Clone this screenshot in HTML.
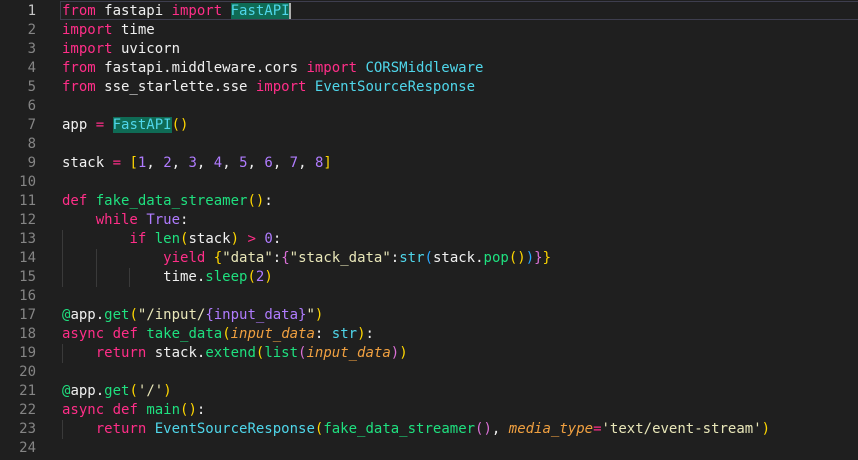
<html><head><style>
body{margin:0;background:#1f1f1f;width:858px;height:460px;overflow:hidden;font-family:"DejaVu Sans Mono","Liberation Mono",monospace;font-size:14px;}
.g{position:absolute;left:0;top:2px;width:36px;text-align:right;color:#858585;line-height:19px}
.g div:first-child{color:#c6c6c6}
.c{position:absolute;left:62px;top:2px;line-height:19px;color:#f0f0f0;white-space:pre}
.cur{position:absolute;left:60px;top:1px;width:800px;height:19px;border:1px solid #3e3e4e;box-sizing:border-box}
.k{color:#ff2e88}.f{color:#1fe07f}.t{color:#4fd6ea}.n{color:#b07cff}.s{color:#e8e6b8}
.y{color:#ffd700}.p{color:#da70d6}.b{color:#2aa8ff}.i{color:#f0a040;font-style:italic}
.h{background:#0f6b55}
.ig{position:absolute;width:1px;background:#3a3a3a}
.caret{position:absolute;left:289px;top:3px;width:2px;height:16px;background:#aeafad}
</style></head><body>
<div class="cur"></div>
<div class="ig" style="left:62px;top:230px;height:57px"></div>
<div class="ig" style="left:96px;top:249px;height:38px"></div>
<div class="ig" style="left:129px;top:268px;height:19px"></div>
<div class="ig" style="left:62px;top:344px;height:19px"></div>
<div class="ig" style="left:62px;top:420px;height:19px"></div>
<div class="g"><div>1</div><div>2</div><div>3</div><div>4</div><div>5</div><div>6</div><div>7</div><div>8</div><div>9</div><div>10</div><div>11</div><div>12</div><div>13</div><div>14</div><div>15</div><div>16</div><div>17</div><div>18</div><div>19</div><div>20</div><div>21</div><div>22</div><div>23</div><div>24</div></div>
<div class="c"><span class="k">from</span> fastapi <span class="k">import</span> <span class="t h">FastAPI</span>
<span class="k">import</span> time
<span class="k">import</span> uvicorn
<span class="k">from</span> fastapi.middleware.cors <span class="k">import</span> <span class="t">CORSMiddleware</span>
<span class="k">from</span> sse_starlette.sse <span class="k">import</span> <span class="t">EventSourceResponse</span>

app <span class="k">=</span> <span class="t h">FastAPI</span><span class="y">()</span>

stack <span class="k">=</span> <span class="y">[</span><span class="n">1</span>, <span class="n">2</span>, <span class="n">3</span>, <span class="n">4</span>, <span class="n">5</span>, <span class="n">6</span>, <span class="n">7</span>, <span class="n">8</span><span class="y">]</span>

<span class="k">def</span> <span class="f">fake_data_streamer</span><span class="y">()</span>:
    <span class="k">while</span> <span class="n">True</span>:
        <span class="k">if</span> <span class="f">len</span><span class="y">(</span>stack<span class="y">)</span> <span class="k">&gt;</span> <span class="n">0</span>:
            <span class="k">yield</span> <span class="y">{</span><span class="s">"data"</span>:<span class="p">{</span><span class="s">"stack_data"</span>:<span class="t">str</span><span class="b">(</span>stack.<span class="f">pop</span><span class="y">()</span><span class="b">)</span><span class="p">}</span><span class="y">}</span>
            time.<span class="f">sleep</span><span class="y">(</span><span class="n">2</span><span class="y">)</span>

<span class="f">@</span>app.<span class="f">get</span><span class="y">(</span><span class="s">"/input/</span><span class="n">{input_data}</span><span class="s">"</span><span class="y">)</span>
<span class="k">async</span> <span class="k">def</span> <span class="f">take_data</span><span class="y">(</span><span class="i">input_data</span>: <span class="t">str</span><span class="y">)</span>:
    <span class="k">return</span> stack.<span class="f">extend</span><span class="y">(</span><span class="f">list</span><span class="p">(</span><span class="i">input_data</span><span class="p">)</span><span class="y">)</span>

<span class="f">@</span>app.<span class="f">get</span><span class="y">(</span><span class="s">'/'</span><span class="y">)</span>
<span class="k">async</span> <span class="k">def</span> <span class="f">main</span><span class="y">()</span>:
    <span class="k">return</span> <span class="t">EventSourceResponse</span><span class="y">(</span><span class="f">fake_data_streamer</span><span class="p">()</span>, <span class="i">media_type</span><span class="k">=</span><span class="s">'text/event-stream'</span><span class="y">)</span>
</div>
<div class="caret"></div>
</body></html>
